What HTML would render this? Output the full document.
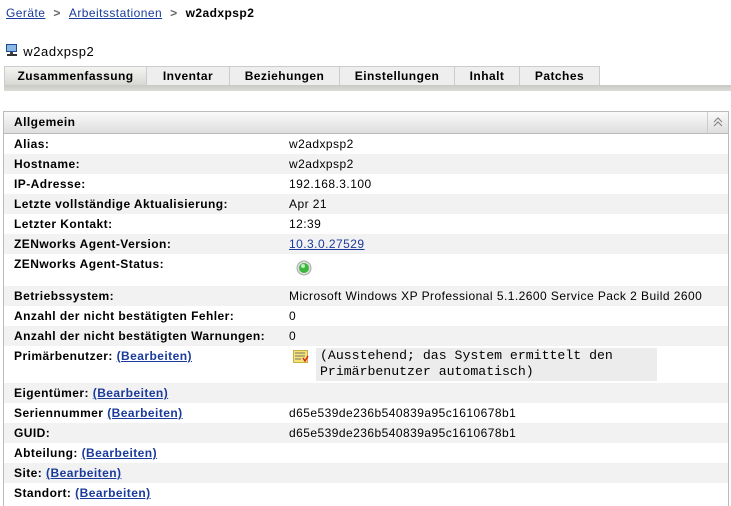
<!DOCTYPE html>
<html><head><meta charset="utf-8"><style>
body{margin:0;width:731px;height:505px;background:#fff;font-family:"Liberation Sans",sans-serif;font-size:12px;color:#000;position:relative;overflow:hidden;letter-spacing:0.45px}
a{color:#1a3a9c;text-decoration:underline}
.bc{position:absolute;left:6px;top:6px;font-size:12px}
.bc .s{color:#666;margin:0 8px;font-weight:bold}
.title{position:absolute;left:5px;top:44px;font-size:13px;letter-spacing:0.6px}
.tabs{position:absolute;left:4px;top:66px;height:20px;display:flex}
.tab{height:19px;border:1px solid #ccc;border-bottom:none;border-left:none;background:#eee;font-weight:bold;font-size:12px;line-height:19px;text-align:center}
.tab.sel{background:linear-gradient(#f4f4f2,#d6d6d2);border-left:1px solid #ccc}
.bar{position:absolute;left:4px;top:85px;width:727px;height:6px;background:linear-gradient(#c8c8c4,#dcdcd8)}
.panel{position:absolute;left:3px;top:111px;width:724px;height:394px;border:1px solid #bbb;border-bottom:none}
.hd{height:21px;background:linear-gradient(#fafafa,#dedede);border-bottom:1px solid #bbb;font-weight:bold;line-height:21px;padding-left:10px;position:relative}
.hd .up{position:absolute;right:0;top:0;width:20px;height:21px;border-left:1px solid #ccc}
.r{height:20px;line-height:20px;position:relative}
.r.g{background:#f2f2f2}
.r .l{position:absolute;left:10px;font-weight:bold}
.r .v{position:absolute;left:285px}
.mono{font-family:"Liberation Mono",monospace;font-size:13.2px;line-height:16px;letter-spacing:0}
</style></head><body>
<div class="bc"><a href="#">Geräte</a><span class="s">&gt;</span><a href="#">Arbeitsstationen</a><span class="s">&gt;</span><b>w2adxpsp2</b></div>
<div class="title"><svg width="14" height="13" style="vertical-align:-1px"><rect x="1" y="0" width="11" height="8" fill="#1c4c8c"/><rect x="2" y="1" width="9" height="6" fill="#8cb8e8"/><rect x="5" y="8" width="3" height="2" fill="#444"/><rect x="2" y="10" width="10" height="2" fill="#333"/></svg> w2adxpsp2</div>
<div class="tabs">
<div class="tab sel" style="width:141px">Zusammenfassung</div>
<div class="tab" style="width:82px">Inventar</div>
<div class="tab" style="width:109px">Beziehungen</div>
<div class="tab" style="width:114px">Einstellungen</div>
<div class="tab" style="width:64px">Inhalt</div>
<div class="tab" style="width:79px">Patches</div>
</div>
<div class="bar"></div>
<div class="panel">
<div class="hd">Allgemein<span class="up"><svg width="20" height="21"><path d="M6 10l4-4 4 4M6 14l4-4 4 4" fill="none" stroke="#888" stroke-width="1.2"/></svg></span></div>
<div class="r"><span class="l">Alias:</span><span class="v">w2adxpsp2</span></div>
<div class="r g"><span class="l">Hostname:</span><span class="v">w2adxpsp2</span></div>
<div class="r"><span class="l">IP-Adresse:</span><span class="v">192.168.3.100</span></div>
<div class="r g"><span class="l">Letzte vollständige Aktualisierung:</span><span class="v">Apr 21</span></div>
<div class="r"><span class="l">Letzter Kontakt:</span><span class="v">12:39</span></div>
<div class="r g"><span class="l">ZENworks Agent-Version:</span><span class="v"><a href="#">10.3.0.27529</a></span></div>
<div class="r" style="height:32px"><span class="l">ZENworks Agent-Status:</span><span class="v" style="left:292px;top:6px"><svg width="16" height="16"><circle cx="8" cy="8" r="7" fill="#ddd" stroke="#aaa"/><circle cx="8" cy="8" r="5" fill="#3cb83c"/><circle cx="7" cy="6" r="2" fill="#bfeebf"/></svg></span></div>
<div class="r g"><span class="l">Betriebssystem:</span><span class="v">Microsoft Windows XP Professional 5.1.2600 Service Pack 2 Build 2600</span></div>
<div class="r"><span class="l">Anzahl der nicht bestätigten Fehler:</span><span class="v">0</span></div>
<div class="r g"><span class="l">Anzahl der nicht bestätigten Warnungen:</span><span class="v">0</span></div>
<div class="r" style="height:37px"><span class="l">Primärbenutzer: <a href="#">(Bearbeiten)</a></span>
<svg style="position:absolute;left:289px;top:4px" width="17" height="14"><rect x="0.5" y="0.5" width="14" height="12" fill="#f4e27a" stroke="#c9b040"/><path d="M2 3h10M2 6h10M2 9h6" stroke="#776" stroke-width="1"/><path d="M10 8l2 3 3-5" stroke="#d22" stroke-width="1.5" fill="none"/></svg>
<div class="mono" style="position:absolute;left:312px;top:2px;width:337px;height:33px;background:#ececec;padding-left:4px">(Ausstehend; das System ermittelt den<br>Primärbenutzer automatisch)</div></div>
<div class="r g"><span class="l">Eigentümer: <a href="#">(Bearbeiten)</a></span></div>
<div class="r"><span class="l">Seriennummer <a href="#">(Bearbeiten)</a></span><span class="v">d65e539de236b540839a95c1610678b1</span></div>
<div class="r g"><span class="l">GUID:</span><span class="v">d65e539de236b540839a95c1610678b1</span></div>
<div class="r"><span class="l">Abteilung: <a href="#">(Bearbeiten)</a></span></div>
<div class="r g"><span class="l">Site: <a href="#">(Bearbeiten)</a></span></div>
<div class="r"><span class="l">Standort: <a href="#">(Bearbeiten)</a></span></div>
</div>
</body></html>
